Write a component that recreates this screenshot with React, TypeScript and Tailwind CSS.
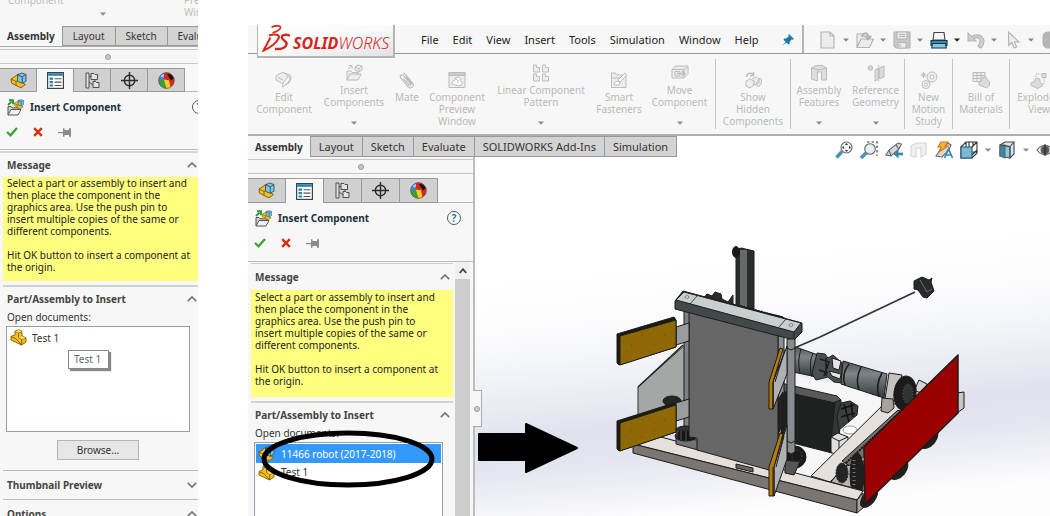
import React from "react";

type IconProps = { className?: string };

const Caret = ({ className = "text-[#8a8a8a]" }: IconProps) => (
  <svg viewBox="0 0 6 4" className={`h-[4px] w-[6px] shrink-0 ${className}`} aria-hidden="true">
    <path d="M0 0.5h6L3 3.8z" fill="currentColor" />
  </svg>
);

const Chevron = ({ down = false }: { down?: boolean }) => (
  <svg viewBox="0 0 10 6" className="h-[6px] w-[10px]" fill="none" stroke="#777" strokeWidth="1.7" aria-hidden="true">
    <path d={down ? "M.8 .8 5 5 9.2 .8" : "M.8 5.2 5 1 9.2 5.2"} />
  </svg>
);

/* ---------- manager tab icons ---------- */

const PartIcon = () => (
  <svg viewBox="0 0 17 17" className="h-[17px] w-[17px] shrink-0" aria-hidden="true">
    <g stroke="#7d5a00" strokeWidth=".9" strokeLinejoin="round">
      <path d="M1 7.500 5 5.800V2.200L9 .8l3 1.500V7l4 2v4l-4.500 3L1 11z" fill="#f4bf1f" />
      <path d="M5 2.400 8.500 4v4.500l3.200 1.800V16" fill="none" />
      <path d="m8.500 4 3.300-1.500M11.700 10.300 16 9M1.200 7.700l5 2.200 5.500 6" fill="none" />
      <path d="m5.200 2.400 3.800-1.500 2.700 1.400L8.500 3.800zM9 8.500l3-1.300 3.700 1.800-4 1.200z" fill="#fbdc6c" stroke="none" />
    </g>
  </svg>
);

const AssemblyShape = () => (
  <>
    <path d="M1 7 5 4.500l3-2.500 5 2v7l2.500 1.500L11 15.800 7 14 1.500 11z" fill="#f4bf1f" stroke="#7d5a00" strokeWidth=".9" />
    <path d="M1.200 7.200 6 9.400v4M6 9.400l3-1.600" fill="none" stroke="#7d5a00" strokeWidth=".9" />
    <path d="m7.500 3 4-2L16 2.500v6.600l-3.700 2.200-4.800-2z" fill="#7fc2dc" stroke="#24576e" strokeWidth=".9" />
    <path d="m7.500 3 4.800 1.800L16 2.500M12.300 4.800v6.400" fill="none" stroke="#24576e" strokeWidth=".9" />
  </>
);

const AssemblyIcon = () => (
  <svg viewBox="0 0 17 17" className="h-[17px] w-[17px] shrink-0" aria-hidden="true">
    <AssemblyShape />
  </svg>
);

const PropertyIcon = () => (
  <svg viewBox="0 0 17 17" className="h-[17px] w-[17px]" aria-hidden="true">
    <rect x=".6" y=".6" width="15.8" height="15.8" fill="#fff" stroke="#39444a" strokeWidth="1.2" />
    <path d="M1.2 1.2h14.6v2.6H1.2z" fill="#2585ab" />
    <path d="M2.5 5.6H6v2.2H2.5zM2.5 9H6v2.2H2.5zM2.5 12.4H6v2.2H2.5z" fill="#2585ab" />
    <path d="M7.5 6.7h7M7.5 10.1h7M7.5 13.5h7" stroke="#555" strokeWidth="1.1" />
  </svg>
);

const ConfigIcon = () => (
  <svg viewBox="0 0 15 17" className="h-[17px] w-[15px]" fill="#e3e3e3" stroke="#4d4d4d" strokeWidth="1" aria-hidden="true">
    <path d="M1 1h3v15H1zM4 4.500h2.500M4 10l4 3" />
    <path d="M6 1.500h3l1 1h2.500v5H6z" />
    <path d="M8 9.500h2.500l1 1h2.500v5H8zM10 7.500v2" />
  </svg>
);

const TargetIcon = () => (
  <svg viewBox="0 0 17 17" className="h-[17px] w-[17px]" fill="none" stroke="#2b2b2b" strokeWidth="1.4" aria-hidden="true">
    <circle cx="8.5" cy="8.500" r="5.200" />
    <path d="M8.500 0v17M0 8.500h17" />
  </svg>
);

const AppearanceIcon = () => (
  <svg viewBox="0 0 17 17" className="h-[17px] w-[17px]" aria-hidden="true">
    <circle cx="8.500" cy="8.500" r="7.900" fill="#d42a1d" />
    <path d="M.6 9C.5 5 3 1.500 6.500.9L5.800 7.500z" fill="#4286d2" />
    <path d="M6.500.9C10 .2 12.500 1.200 14.500 3.400L11 8 6 7z" fill="#d42a1d" />
    <path d="M9 2.200c3-.6 5.500 1.200 6.800 4L13 8.500z" fill="#151515" />
    <path d="m.6 9 5.200-1.500 2.700 8.900C4.500 16.400 1.200 13.500.6 9z" fill="#37a03c" />
    <path d="m5.800 7.500 5.200.7 1.500 7.100c-1.500.9-2.800 1.100-4 1.100z" fill="#f1cf22" />
    <path d="M2.500 4.500C4 2.500 5 2 6 2l-.5 3.500z" fill="#a9cdf3" />
    <circle cx="8.500" cy="8.500" r="7.900" fill="none" stroke="#555" strokeWidth=".6" />
  </svg>
);

const InsertIcon = () => (
  <svg viewBox="0 0 17 17" className="h-[17px] w-[17px] shrink-0" aria-hidden="true">
    <path d="M1 16V7.500h3l1 1.300h7V11" fill="#cfcfcf" stroke="#555" />
    <path d="M1 16 4 10.500h10L11 16z" fill="#f1f1f1" stroke="#555" />
    <g transform="translate(6.500 0) scale(.62)">
      <AssemblyShape />
    </g>
    <path d="M1 6 4.600 2.600M2 1.200h4v4" fill="none" stroke="#2a9b36" strokeWidth="1.900" />
  </svg>
);

const CheckIcon = () => (
  <svg viewBox="0 0 12 10" className="h-[10px] w-[12px]" fill="none" stroke="#3aa52c" strokeWidth="2.300" aria-hidden="true">
    <path d="m1 5 3.500 3.300L11 1" />
  </svg>
);

const CrossIcon = () => (
  <svg viewBox="0 0 10 10" className="h-[10px] w-[10px]" fill="none" stroke="#dd2c10" strokeWidth="2.400" aria-hidden="true">
    <path d="m1.200 1.200 7.600 7.600M8.800 1.200 1.200 8.800" />
  </svg>
);

const PushpinIcon = () => (
  <svg viewBox="0 0 14 9" className="h-[9px] w-[14px]" fill="#8b8b8b" aria-hidden="true">
    <path d="M0 4h5v1.200H0zM5 .3h1.500v1.800h4.500V.3H13v8.400h-2V6.900H6.500v1.800H5z" />
  </svg>
);

const managerTabs = [
  { label: "FeatureManager", icon: <AssemblyIcon /> },
  { label: "PropertyManager", icon: <PropertyIcon /> },
  { label: "ConfigurationManager", icon: <ConfigIcon /> },
  { label: "DimXpertManager", icon: <TargetIcon /> },
  { label: "DisplayManager", icon: <AppearanceIcon /> },
];

/* ---------- property manager parts ---------- */

const CommandTabs = ({ names, tabClass }: { names: string[]; tabClass: string }) => (
  <div role="tablist" className="flex shrink-0">
    {names.map((name, i) => (
      <button
        key={name}
        role="tab"
        aria-selected={i === 0}
        className={
          i === 0
            ? "shrink-0 border-r border-[#999] bg-[#f7f7f7] px-[7px] font-bold text-[#333]"
            : `shrink-0 border-t border-r border-b border-[#999] bg-[#d3d3d3] ${tabClass}`
        }
      >
        {name}
      </button>
    ))}
  </div>
);

const GripStrip = ({ pad = "" }: { pad?: string }) => (
  <div className={`mt-[2px] flex h-[15px] shrink-0 items-center justify-center border-y border-[#c6c6c6] ${pad}`}>
    <span className="size-[6px] rounded-full border border-[#999] bg-[#c9c9c9]" />
  </div>
);

const ManagerTabs = ({ tabClass }: { tabClass: string }) => (
  <div role="tablist" className="mt-[4px] flex shrink-0 border-b border-[#b9b9b9]">
    {managerTabs.map((tab, i) => (
      <button
        key={tab.label}
        role="tab"
        aria-label={tab.label}
        aria-selected={i === 1}
        className={`-mb-px flex items-center justify-center border-t border-r border-[#999] ${tabClass} ${
          i === 1 ? "bg-[#f7f7f7]" : "border-b bg-[#d0d0d0]"
        }`}
      >
        {tab.icon}
      </button>
    ))}
  </div>
);

const TitleRow = ({ children }: { children?: React.ReactNode }) => (
  <>
    <div className="flex h-[30px] shrink-0 items-center gap-[6px] overflow-hidden pl-[7px]">
      <InsertIcon />
      <h2 className="font-bold whitespace-nowrap text-[#22303c]">Insert Component</h2>
      {children}
    </div>
    <div className="flex h-[20px] shrink-0 items-center gap-[15px] pl-[6px]">
      <button aria-label="OK"><CheckIcon /></button>
      <button aria-label="Cancel"><CrossIcon /></button>
      <button aria-label="Keep visible"><PushpinIcon /></button>
    </div>
  </>
);

const SectionHeader = ({ title, down, size }: { title: string; down?: boolean; size: string }) => (
  <button className={`flex w-full shrink-0 items-center justify-between pl-[4px] font-bold text-[#444] ${size}`}>
    {title}
    <Chevron down={down} />
  </button>
);

const Message = ({ height }: { height: string }) => (
  <div className={`shrink-0 bg-[#ffff80] pl-[4px] leading-[12px] text-[#222] ${height}`}>
    <p>
      Select a part or assembly to insert and
      <br />
      then place the component in the
      <br />
      graphics area. Use the push pin to
      <br />
      insert multiple copies of the same or
      <br />
      different components.
    </p>
    <p className="mt-[12px] whitespace-nowrap">
      Hit OK button to insert a component at
      <br />
      the origin.
    </p>
  </div>
);

const HelpIcon = () => (
  <button
    aria-label="Help"
    className="flex size-[14px] shrink-0 items-center justify-center rounded-full border border-[#555] bg-white font-bold text-[#1f7aa5]"
  >
    ?
  </button>
);

const LeftWindow = () => (
  <aside className="flex w-[198px] shrink-0 flex-col overflow-hidden bg-[#f7f7f7]">
    <div className="flex h-[26px] shrink-0 overflow-hidden text-[#bdbdbd]">
      <span className="-mt-[6px] w-[100px] pl-[8px] leading-[12px]">Component</span>
      <span className="flex pt-[12px]"><Caret /></span>
      <span className="-mt-[6px] ml-auto w-[14px] shrink-0 leading-[12px]">
        <span className="block">Preview</span>
        <span className="block">Window</span>
      </span>
    </div>
    <div className="flex h-[21px] shrink-0 overflow-hidden border-b border-[#aaa]">
      <CommandTabs names={["Assembly", "Layout", "Sketch", "Evaluate"]} tabClass="px-[10px]" />
    </div>
    <GripStrip pad="pl-[18px]" />
    <ManagerTabs tabClass="h-[24px] w-[37px]" />
    <TitleRow>
      <span className="-mr-[8px] ml-auto"><HelpIcon /></span>
    </TitleRow>
    <div className="mt-[7px] h-[2px] shrink-0 border-t border-[#bbb]" />
    <div className="flex flex-col border-t-2 border-[#d6d6d6] pl-[3px]">
      <SectionHeader title="Message" size="h-[24px] pr-px" />
      <Message height="h-[104px]" />
      <div className="mt-[4px] h-[2px] shrink-0 bg-[#d2d2d2]" />
      <SectionHeader title="Part/Assembly to Insert" size="h-[24px] pr-px" />
      <div className="h-[15px] shrink-0 pl-[4px] leading-[13px]">Open documents:</div>
      <ul aria-label="Open documents" className="mr-[8px] ml-[3px] flex h-[106px] shrink-0 flex-col border border-[#999fa8] bg-white pt-[2px]">
        <li className="flex items-center gap-[5px] pl-[3px]">
          <PartIcon /> Test 1
        </li>
        <li role="tooltip" className="mt-[4px] ml-[61px] h-[19px] w-[41px] border border-[#888] bg-white pl-[5px] leading-[17px] text-[#666] shadow-[2px_2px_1px_#888]">
          Test 1
        </li>
      </ul>
      <button className="mt-[8px] ml-[54px] h-[20px] w-[82px] shrink-0 border border-[#b5b5b5] bg-[#e6e6e6]">Browse...</button>
      <div className="mt-[10px] h-px shrink-0 bg-[#bbb]" />
      <SectionHeader title="Thumbnail Preview" down size="h-[28px] pr-px" />
      <div className="h-px shrink-0 bg-[#bbb]" />
      <SectionHeader title="Options" size="h-[28px] pr-px" />
    </div>
  </aside>
);

/* ---------- ribbon ---------- */

const gray = { fill: "#ededed", stroke: "#bcbcbc", strokeWidth: 1 };

const Glyph = ({ children }: { children: React.ReactNode }) => (
  <svg viewBox="0 0 18 18" className="h-[18px] w-[18px] shrink-0" {...gray} aria-hidden="true">
    {children}
  </svg>
);

const glyphs = {
  edit: (
    <Glyph>
      <path d="M1 5 5 2.500 8 1.500 12 3v3l4 2-2 4-4 2-9-5z" />
      <path d="m8 12 6-7 2.500 2-6 7-3 2z" fill="#fafafa" />
      <path d="M3 6.500 8 9M9 2l6 2v5" fill="none" />
    </Glyph>
  ),
  insert: (
    <Glyph>
      <path d="M2 16V7h4l1 1.500h6V11M2 16l3-6h11l-3 6zM10 3l3-2 4 1v4l-3 2-4-2zM10 3l4 1.500L17 2M14 4.500V8" />
      <path d="m3 5 3.500-3M3.500 1.500h3.500V5" fill="none" />
    </Glyph>
  ),
  mate: (
    <Glyph>
      <path d="M5.500 7.500 11 14c1 1 2.300 0 1.500-1.200L5.800 4.700C4 2.800 1.200 4.800 2.700 7l7.500 8.800c2.500 2.500 6.500-.5 4.600-3.500L7.500 3.500C6.800 2.600 6 2 5 2M8 6l6 7" fill="none" strokeWidth="1.200" />
    </Glyph>
  ),
  preview: (
    <Glyph>
      <path d="M1 1.500h16v15H1z" />
      <path d="M1 1.500h16v3H1z" fill="#c9c9c9" />
      <path d="m4 11 3-2V7l3-1 2.500 1.500v2L14 11v2.500L10.500 15 4 13zM7 7.500l3 1.500v3" fill="#fff" />
    </Glyph>
  ),
  pattern: (
    <Glyph>
      <path d="M1.500 1h3v2.500h3V8h-6zM10.500 1h3v2.500h3V8h-6zM1.500 10h3v2.500h3V17h-6zM10.500 10h3v2.500h3V17h-6z" />
    </Glyph>
  ),
  fasteners: (
    <Glyph>
      <path d="M1.500 2h4l1 2h9.500v12.500H1.500zM1.500 7h11" />
      <path d="m8 9 7-7 2 2-7 7zM5 11l3-1 2 2-1 2H4z" fill="#fff" />
    </Glyph>
  ),
  move: (
    <Glyph>
      <path d="M1 5.500 5 2h12v7.500L13 14H1zM1 5.500h12V14M13 5.500 17 2M4 7.500h5v4.500H4z" />
      <path d="M6 9.500h7M11 7l3 2.500-3 2.500" fill="none" strokeWidth="1.500" />
    </Glyph>
  ),
  show: (
    <Glyph>
      <path d="m2 10 4-2 4 2v4l-4 3-4-2zM8 8l4-2 3 2v4l-3 2-3-1M12 13l4-6 1.500 1v4l-3 4z" />
      <path d="M2.500 6c0-4 5-5 7-2M9.500 1v3.500H6" fill="none" strokeWidth="1.500" />
    </Glyph>
  ),
  features: (
    <Glyph>
      <path d="M1.500 4 6 1.500h6L16.500 4v12h-5V8h-4v9l-6-2z" fill="#dedede" />
      <path d="m1.500 4 6 1.500h4l5-1.500M7.500 5.500V9" fill="none" />
    </Glyph>
  ),
  reference: (
    <Glyph>
      <circle cx="3.500" cy="4" r="2.300" fill="#d4d4d4" />
      <path d="m8 6 3.500-2v11L8 17zM12 4l5-2v11l-5 2z" fill="#dadada" />
      <path d="M11.700 1v16.500" strokeDasharray="2 1" />
    </Glyph>
  ),
  motion: (
    <Glyph>
      <circle cx="12" cy="6" r="5" /><circle cx="12" cy="6" r="2" fill="#fff" />
      <circle cx="6" cy="13.500" r="4" /><circle cx="6" cy="13.500" r="1.500" fill="#fff" />
      <path d="M3.500 1v6M.5 4h6M1.500 2l4 4M5.500 2l-4 4" />
    </Glyph>
  ),
  bom: (
    <Glyph>
      <path d="M1 1.500h12v9H1zM1 4.500h12M5 1.500v9M9 1.500v9M1 7.500h12" />
      <path d="m7 11 3-1.500V7l3-1 2 1v2l2.500 1.500V14l-3 3L7 14z" fill="#dcdcdc" />
    </Glyph>
  ),
  explode: (
    <Glyph>
      <path d="m1 12 4-2V8l3-1 2 1.500v3l2 1V15l-4 2.500-7-3zM12 2.500h4v4h-4z" fill="#dcdcdc" />
      <path d="M14 7v6h-2M6 6V3h5" fill="none" strokeDasharray="1.500 1" />
    </Glyph>
  ),
};

type RibbonItem = { lines: string[]; icon: React.ReactNode; width: string; caret?: boolean; sep?: boolean };

const ribbon: RibbonItem[] = [
  { lines: ["Edit", "Component"], icon: glyphs.edit, width: "w-[72px]" },
  { lines: ["Insert", "Components"], icon: glyphs.insert, width: "w-[68px]", caret: true },
  { lines: ["Mate"], icon: glyphs.mate, width: "w-[38px]" },
  { lines: ["Component", "Preview", "Window"], icon: glyphs.preview, width: "w-[62px]" },
  { lines: ["Linear Component", "Pattern"], icon: glyphs.pattern, width: "w-[106px]", caret: true },
  { lines: ["Smart", "Fasteners"], icon: glyphs.fasteners, width: "w-[50px]" },
  { lines: ["Move", "Component"], icon: glyphs.move, width: "w-[71px]", caret: true, sep: true },
  { lines: ["Show", "Hidden", "Components"], icon: glyphs.show, width: "w-[74px]", sep: true },
  { lines: ["Assembly", "Features"], icon: glyphs.features, width: "w-[56px]", caret: true },
  { lines: ["Reference", "Geometry"], icon: glyphs.reference, width: "w-[57px]", caret: true, sep: true },
  { lines: ["New", "Motion", "Study"], icon: glyphs.motion, width: "w-[47px]", sep: true },
  { lines: ["Bill of", "Materials"], icon: glyphs.bom, width: "w-[56px]", sep: true },
  { lines: ["Exploded", "View"], icon: glyphs.explode, width: "w-[58px]" },
];

const Ribbon = () => (
  <div className="flex h-[82px] shrink-0 overflow-hidden border-b-2 border-[#b0b0b0] text-[#b9b9b9]">
    {ribbon.map((item) => (
      <React.Fragment key={item.lines.join(" ")}>
        <button
          className={`flex shrink-0 flex-col items-center gap-[2px] pb-[9px] leading-[12px] whitespace-nowrap ${item.width} ${
            item.caret ? "pt-[10px]" : "pt-[17px]"
          }`}
        >
          {item.icon}
          <span>
            {item.lines.map((line) => (
              <span key={line} className="block">{line}</span>
            ))}
          </span>
          {item.caret && <span className="mt-auto"><Caret /></span>}
        </button>
        {item.sep && <span className="my-[5px] w-px shrink-0 bg-[#c4c4c4]" />}
      </React.Fragment>
    ))}
  </div>
);

/* ---------- title bar ---------- */

const QuickIcon = ({ children }: { children: React.ReactNode }) => (
  <svg viewBox="0 0 18 18" className="h-[18px] w-[18px] shrink-0" fill="#ececec" stroke="#b3b3b3" strokeWidth="1.100" aria-hidden="true">
    {children}
  </svg>
);

const quickTools = [
  { label: "New", icon: <QuickIcon><path d="M2 1h9l4 4v12H2zM11 1v4h4" /></QuickIcon> },
  { label: "Open", icon: <QuickIcon><path d="M1 16.500V3h5l1.500 2H14v3M1 16.500 5 8h12.500l-4 8.500z" /><path d="M6 6c1-5 6-5 6 0" fill="none" strokeWidth="2" /><path d="M9 5.500h6L12 9z" fill="#b3b3b3" /></QuickIcon> },
  { label: "Save", icon: <QuickIcon><path d="M1 1h16v16H3l-2-2z" fill="#c8c8c8" /><path d="M4 1h10v7H4zM5 11.500h8V17H5z" /><path d="M6 3.500h6M6 5.500h6M7 13v3" /></QuickIcon> },
  { label: "Print", dark: true, icon: <QuickIcon><path d="M4 1.500h10l1 7.500H3z" fill="#f4f4f4" stroke="#444" /><path d="M1 9.500h16v5H1z" fill="#2e8cb2" stroke="#16384a" /><path d="M2.500 12.500h13l.8 4.500H1.700z" fill="#8cc5dc" stroke="#16384a" /></QuickIcon> },
  { label: "Undo", icon: <QuickIcon><path d="M1 2v8h8L6.500 7.500c4-2 8 0 6 4.500L11 15.500l3 1.500c6-7 2-14-6-13L4.500 5.500z" fill="#cfcfcf" /></QuickIcon> },
  { label: "Select", icon: <QuickIcon><path d="m4.500 1 .2 13.500L8 11.500l2.200 5.500 2.500-1L10.500 11h4.500z" /></QuickIcon> },
  { label: "Rebuild", icon: <QuickIcon><rect x="2" y="1" width="15" height="16" rx="5" fill="#b5b5b5" /></QuickIcon> },
];

const TitleBar = () => (
  <header className="flex h-[29px] shrink-0 border-b border-[#999]">
    <div className="z-10 ml-[9px] flex h-[33px] w-[138px] shrink-0 gap-[3px] border-r-2 border-b-2 border-l border-[#b5b5b5] bg-linear-to-br from-white via-[#fafafa] to-[#e2e2e2] pl-[4px] text-[#d8261c]">
      <svg viewBox="0 0 28 27" className="h-[27px] w-[28px] shrink-0" fill="none" stroke="currentColor" aria-hidden="true">
        <path d="M9.500 2.200C13 .5 19 .3 18.500 2.600 18 4.800 13.500 7 10.500 7.800" strokeWidth="1.700" />
        <path d="M7 10.500C13 8.500 18 9.500 16.800 12.800 15 17.500 8 23 1.500 25.500L8.500 12.500" strokeWidth="2" />
        <path d="M28 10.500C24 9.200 20 9.800 19.800 12 19.500 15.500 25.500 15.500 24.500 19.500 23.500 23.300 18 24.300 13 24" strokeWidth="2.400" />
      </svg>
      <span className="pt-[8px] text-[16px] leading-[20px] italic">
        <b>SOLID</b><span className="font-light">WORKS</span>
      </span>
    </div>
    <nav className="ml-[26px] flex shrink-0 items-center gap-[14px] pt-[2px] text-[11px] text-[#222]">
      {["File", "Edit", "View", "Insert", "Tools", "Simulation", "Window", "Help"].map((m) => (
        <button key={m}>{m}</button>
      ))}
    </nav>
    <button aria-label="Pin menu" className="ml-auto shrink-0 pt-[2px]">
      <svg viewBox="0 0 12 12" className="h-[12px] w-[12px]" aria-hidden="true">
        <path d="M7 0 12 5 10.500 5.800 9.500 5.500 7.500 8.200 7.500 10 6.300 10.500 4.300 8.500 .5 11.700 3.500 7.700 1.600 5.800 2 4.500 4 4.500 6.700 2.500 6.300 1z" fill="#1f79a8" />
      </svg>
    </button>
    <div className="ml-[8px] flex w-[248px] shrink-0 overflow-hidden border-l-2 border-[#b5b5b5] pl-[15px]">
      {quickTools.map((t) => (
        <button key={t.label} aria-label={t.label} className="flex w-[37px] shrink-0 items-center gap-[6px] pt-[2px]">
          {t.icon}
          <Caret className={t.dark ? "text-[#222]" : "text-[#888]"} />
        </button>
      ))}
    </div>
  </header>
);

/* ---------- heads-up toolbar ---------- */

const HudIcon = ({ children }: { children: React.ReactNode }) => (
  <svg viewBox="0 0 18 18" className="h-[18px] w-[18px] shrink-0" fill="none" stroke="#666" strokeWidth="1.100" aria-hidden="true">
    {children}
  </svg>
);

const Cube = ({ shift = false }: { shift?: boolean }) =>
  shift ? (
    <>
      <path d="M2 4 7 1h9v12l-4 4-10-2z" fill="#d4eaf2" stroke="#444" />
      <path d="M2 4h5v13l-5-2z" fill="#2f8bb0" />
      <path d="M7 4.500 12 6v11l-5-1z" fill="#8fc9df" />
      <path d="m2 4 10 1.500L16 1M12 5.500V17" stroke="#444" />
    </>
  ) : (
    <>
      <path d="M1 6 6 1h11v11l-5 5H1zM6 1v5M12 6l5-5M12 11h5M9 1v5M13 1v4M12 14l5-5" stroke="#333" />
      <path d="M1 6h11v11H1z" fill="#7ab9d3" stroke="#24586e" />
    </>
  );

const hud = [
  { label: "Zoom to fit", icon: <HudIcon><path d="m1.500 16.500 5.500-6" stroke="#4a93b5" strokeWidth="3.500" /><circle cx="11.500" cy="6.500" r="5.500" fill="#eef4f6" /><path d="m11.500 2 1.500 2h-3zM11.500 11l1.500-2h-3zM7 6.500l2-1.500v3zM16 6.500l-2-1.500v3z" fill="#333" stroke="none" /></HudIcon> },
  { label: "Zoom to area", icon: <HudIcon><path d="m1 17 5-5" stroke="#4a93b5" strokeWidth="3.500" /><circle cx="10" cy="8" r="5.300" fill="#e6f0f4" /><path d="M7 1h10v14" stroke="#333" strokeDasharray="2.500 2" /></HudIcon> },
  { label: "Previous view", icon: <HudIcon><path d="M1 14 4 9l9-7 3.500 1L14 8l-8 7z" fill="#d8d8d8" /><path d="m4 9 2 6M11 3.500 13.500 8" /><path d="M18 13h-7" stroke="#2d87ae" strokeWidth="2.600" /><path d="m8.500 13 5-4.500v9z" fill="#2d87ae" stroke="none" /></HudIcon> },
  { label: "Section view", icon: <HudIcon><path d="M1 5 6 2h10v11l-5 3V7H6v9l-5-1z" fill="#f0f0f0" stroke="#d4d4d4" /></HudIcon> },
  { label: "Annotations", icon: <HudIcon><path d="m1 15 4-6 8-7 3 2-2 5-7 7z" fill="#d8d8d8" /><path d="M6 1h7L10 5h3L4 11 6 6H3z" fill="#f7b63b" stroke="#d8701c" /><path d="m9.500 17 4-9 4 9M11 14h5" stroke="#2d87ae" strokeWidth="1.700" /></HudIcon> },
  { label: "View orientation", icon: <HudIcon><Cube /></HudIcon>, caret: true },
  { label: "Display style", icon: <HudIcon><Cube shift /></HudIcon>, caret: true },
  { label: "Hide items", icon: <HudIcon><path d="M1 9c4-6 12-6 16 0-4 6-12 6-16 0z" fill="#f4f4f4" /><circle cx="9" cy="9" r="4" fill="#555" /><path d="M9 3v12" stroke="#222" /></HudIcon> },
];

const HeadsUp = () => (
  <div className="ml-auto flex h-[28px] w-[215px] shrink-0 items-center gap-[7px]">
    {hud.map((h) => (
      <button key={h.label} aria-label={h.label} className="flex shrink-0 items-center gap-[7px]">
        {h.icon}
        {h.caret && <Caret />}
      </button>
    ))}
  </div>
);

/* ---------- model view ---------- */

const Robot = () => (
  <svg
    viewBox="475 157 575 359"
    preserveAspectRatio="xMinYMin slice"
    className="h-full w-full"
    stroke="#1c1c1c"
    strokeWidth="1"
    strokeLinejoin="round"
    role="img"
    aria-label="Robot assembly"
  >
    <defs>
      <linearGradient id="cyl" x1="0" y1="0" x2="0" y2="1">
        <stop offset="0" stopColor="#4f5659" /><stop offset=".35" stopColor="#7c8588" /><stop offset="1" stopColor="#33393b" />
      </linearGradient>
      <linearGradient id="sky" x1=".4" y1="0" x2=".55" y2="1">
        <stop offset=".25" stopColor="#fff" stopOpacity="0" /><stop offset=".72" stopColor="#dfe2ed" /><stop offset=".8" stopColor="#e3e5ef" /><stop offset=".97" stopColor="#fdfdfe" />
      </linearGradient>
      <pattern id="grain" width="23" height="17" patternUnits="userSpaceOnUse">
        <path d="M0 0h23v17H0z" fill="#8f6a04" stroke="none" />
        <path d="M2 2h1M9 5h2M17 3h1M5 11h1M13 9h1M20 12h2M10 15h1" stroke="#6b4e00" strokeWidth=".7" />
      </pattern>
    </defs>
    <path d="M475 157h575v359H475z" fill="url(#sky)" stroke="none" />

    {/* floor inside the frame */}
    <path d="m700 445 90-70 110 20 20 15-60 80-60-5z" fill="#f6f6f6" stroke="none" />

    {/* mast */}
    <path d="m736 250 5-2 13 3v64l-18-5z" fill="#2b2d2d" />
    <path d="M740 250h7v62l-7-2z" fill="#686a6a" stroke="none" />
    <ellipse cx="736" cy="252" rx="3.500" ry="5.500" fill="#191919" />
    <path d="m703 299 4-5 5 2 3-4 6 2 1 5 6 3 5-7v9l8 3 42 10 3 7-80-20z" fill="#2a2a2a" />
    <path d="m740 307 44 12" stroke="#111" strokeWidth="4" strokeDasharray="2 1" />

    {/* side plate and rear post */}
    <path d="m685 345-47 42v28l51-10z" fill="#a5a6a6" stroke="#333" />
    <path d="m683 345-45 42" stroke="#222" strokeWidth="1.500" />
    <path d="M684 308h6v132h-6z" fill="#7d8183" />
    <ellipse cx="672" cy="401" rx="9" ry="5" fill="#252525" />

    {/* cable and sensor */}
    <path d="m792 349 28-12 95-45" fill="none" stroke="#333" strokeWidth="1.700" />
    <path d="m914 281 8-4 7 3 3-2-1 4 3 9-7 7-4-1-5-7-4-1z" fill="#272b2b" />
    <path d="m920 280 7 12 5-3" fill="none" stroke="#6a7070" />

    {/* motors */}
    <path d="m793 346 25 9-1 22-24-5z" fill="url(#cyl)" />
    <path d="M801 349q-4 12-1 24M813 353q-5 12-1 24" fill="none" />
    <path d="m817 353 8 1 3 4 5-3 9 8v20l-8-1-6-5-12 3-4-6z" fill="#485050" />
    <path d="m832 358 9 3-2 9-6-2zM829 371l12 3-1 5-8-3z" fill="#e7e4e1" />
    <path d="m820 359 9 3-5 14M826 358v18M819 370l9 3" fill="none" strokeWidth="1.500" />
    <path d="m843 361 44 13-3 24-43-14z" fill="url(#cyl)" />
    <path d="M849 364q-8 10-4 21M861 367q-6 12-2 23M882 373q-7 12-3 24" fill="none" strokeWidth="1.500" />
    <path d="m889 373 13 2-5 26-12-2z" fill="#c7c2bd" />

    {/* battery */}
    <path d="m781 383 56 13 4 4-6 5-54-14z" fill="#57595a" />
    <path d="m781 391 54 12-3 50-51-13z" fill="#1f2020" />
    <path d="m835 402 6-2-2 45-9 7z" fill="#343636" />
    <path d="m841 403 9-2 8 5-1 9-18 15-2-14z" fill="#3b3f40" />
    <path d="m841 409 13-4M841 417l14-4M844 404l5 18M851 403l2 14" stroke="#111" strokeWidth="1.500" />
    <ellipse cx="850" cy="430" rx="7" ry="4" fill="#fff" stroke="#999" />
    <path d="m831 437 7-4 10 4v11l-10 8-7-4z" fill="#dedede" />
    <path d="m831 437 8 4 9-4M839 441v14" fill="none" />

    {/* cross beam */}
    <path d="m811 476 75-74 18 4-74 76z" fill="#e5e0db" />
    <path d="m882 398 11 1 1 9-6 5-7-2z" fill="#a8a29e" />
    <path d="m919 380 8 4-4 9-9-2z" fill="#d9d4cf" />
    <ellipse cx="905" cy="393" rx="11" ry="17" fill="#1b1b1b" transform="rotate(8 905 393)" />
    <ellipse cx="908" cy="394" rx="5" ry="10" fill="#303434" stroke="#666" strokeDasharray="1 2" />
    <path d="m842 461 56-51 5 4-50 54z" fill="#77716d" />
    <path d="m846 463 50-47" stroke="#111" strokeWidth="2" strokeDasharray="2 1" />
    <path d="m831 482 12-15 21-6v30z" fill="#bbb5b0" />
    <ellipse cx="842" cy="473" rx="6" ry="10" fill="#242424" strokeDasharray="2 1" />
    <ellipse cx="857" cy="475" rx="7" ry="22" fill="#1f1f1f" />
    <path d="M854 460v32" stroke="#777" strokeDasharray="1 3" strokeWidth="3" />

    {/* front beam */}
    <path d="m633 444 24-8 206 55-6 9z" fill="#e5e0dc" />
    <path d="m633 444 224 56v13l-224-60z" fill="#7b7672" />
    <path d="m857 500 6-7 1 14-7 6z" fill="#aaa49f" />
    <path d="m736 464 17 4v4l-17-4z" fill="#666" />
    <path d="m676 438 22 2v10l-22-6z" fill="#727373" />
    <ellipse cx="686" cy="431" rx="11" ry="5" fill="#303030" />
    <ellipse cx="686" cy="436" rx="11" ry="5" fill="#151515" />
    <path d="M677 430v8M681 431v9M686 431v10M691 431v8" stroke="#555" />

    {/* plow */}
    <ellipse cx="928" cy="438" rx="8" ry="12" fill="#1f1f1f" transform="rotate(40 928 438)" />
    <ellipse cx="898" cy="469" rx="8" ry="12" fill="#1f1f1f" transform="rotate(40 898 469)" />
    <ellipse cx="869" cy="498" rx="6" ry="11" fill="#1f1f1f" transform="rotate(40 869 498)" />
    <path d="m957 393 7-1v16l-7 5z" fill="#c9c5c1" />
    <path d="m864 447 94-92v58l-93 91z" fill="#9a0000" strokeWidth="1.500" />

    {/* centre panel */}
    <path d="M778 330h6v62l-4 35-2 10z" fill="#8b8f91" />
    <path d="m778 400 5-8v32l-5 10z" fill="#222" />
    <path d="M689 304 778 328v137l-9 5-72-20v-12l-8-1z" fill="#666" />
    <path d="m675 301 8-10 119 32v9l-8 8-119-31z" fill="#43494a" />
    <path d="m676 300 8-8 117 31-7 9z" fill="#c9ced0" />
    <path d="m690 304 7-8M779 327l7-8M794 332v8" fill="none" strokeWidth=".8" />
    <ellipse cx="687" cy="297" rx="2" ry="1.300" fill="#eee" strokeWidth=".5" /><ellipse cx="791" cy="325" rx="2" ry="1.300" fill="#eee" strokeWidth=".5" />

    {/* front post */}
    <ellipse cx="795" cy="457" rx="11" ry="11" fill="#1a1a1a" />
    <path d="m785 460 15 2-6 13-9-2z" fill="#555" />
    <ellipse cx="797" cy="456" rx="5" ry="6" fill="none" stroke="#555" strokeDasharray="1 2" />
    <path d="M787 339h8v113l-4 2-4-2z" fill="#888c8f" />
    <path d="M787 441l4 2 4-2M787 348l4 2 4-2" fill="none" />

    {/* paddles */}
    <path d="m676 327 13-4v18l-13 4z" fill="#999c9d" />
    <path d="m676 403 13-4v18l-13 4z" fill="#999c9d" />
    <path d="m617 334 57-17 2 3v27l-57 18-2-2z" fill="#1e1a10" />
    <path d="m620 336 56-16v27l-56 18z" fill="url(#grain)" />
    <path d="m617 421 57-18 2 2v27l-57 19-2-2z" fill="#1e1a10" />
    <path d="m620 423 56-18v27l-56 19z" fill="url(#grain)" />
    <path d="m773 382 14-36v28l-14 35z" fill="#aeb1b2" />
    <path d="m769 382 11-34 3 1-10 33v27h-4z" fill="#b87d09" />
    <path d="M773 382v27M775 382l10-32" fill="none" />
    <path d="m774 467 13-42v34l-13 37z" fill="#aeb1b2" />
    <path d="m769 467 11-34 3 1-9 33v29h-5z" fill="#b87d09" />
    <path d="M773 467v29M776 467l8-31" fill="none" />
    <path d="M479 434h47v-10l51 24-51 24v-12h-47z" fill="#000" stroke="#000" strokeWidth="2" />
  </svg>
);

const RightPanel = () => (
  <section className="relative flex w-[225px] shrink-0 flex-col overflow-hidden bg-[#f7f7f7]">
    <GripStrip />
    <ManagerTabs tabClass="h-[25px] w-[38px]" />
    <TitleRow>
      <span className="ml-auto pr-[12px]"><HelpIcon /></span>
    </TitleRow>
    <div className="mt-[8px] h-px shrink-0 bg-[#bbb]" />
    <div className="flex min-h-0 flex-1">
      <div className="flex min-w-0 flex-1 flex-col overflow-hidden pl-[3px]">
        <div className="mt-[1px] h-px shrink-0 bg-[#ccc]" />
        <SectionHeader title="Message" size="h-[26px] pr-[3px]" />
        <Message height="h-[107px] pt-px" />
        <div className="mt-[4px] h-[2px] shrink-0 bg-[#d2d2d2]" />
        <SectionHeader title="Part/Assembly to Insert" size="h-[24px] pr-[3px]" />
        <div className="h-[15px] shrink-0 pl-[4px] leading-[13px]">Open documents:</div>
        <ul role="listbox" aria-label="Open documents" className="mr-[10px] ml-[3px] h-[110px] shrink-0 border border-[#999fa8] bg-white p-px">
          <li role="option" aria-selected="true" className="flex h-[19px] items-center gap-[6px] bg-[#3399ff] pl-[2px] text-white">
            <AssemblyIcon /> 11466 robot (2017-2018)
          </li>
          <li role="option" aria-selected="false" className="flex h-[18px] items-center gap-[6px] pl-[2px]">
            <PartIcon /> Test 1
          </li>
        </ul>
      </div>
      <div className="ml-[2px] w-[15px] shrink-0 bg-[#cdcdcd]">
        <button aria-label="Scroll up" className="flex h-[17px] w-full items-center justify-center bg-[#f0f0f0]">
          <svg viewBox="0 0 8 6" className="h-[6px] w-[8px]" fill="none" stroke="#444" strokeWidth="1.800" aria-hidden="true">
            <path d="M.7 5 4 1.200 7.300 5" />
          </svg>
        </button>
      </div>
      <div className="w-[3px] shrink-0" />
    </div>
    <svg viewBox="0 0 176 60" className="absolute top-[272px] left-[12px] h-[60px] w-[176px]" fill="none" stroke="#000" strokeWidth="5" aria-hidden="true">
      <ellipse cx="88" cy="30" rx="84" ry="26" />
    </svg>
  </section>
);

const RightWindow = () => (
  <main className="mt-[25px] flex min-w-0 flex-1 flex-col overflow-hidden bg-[#f7f7f7]">
    <TitleBar />
    <Ribbon />
    <div className="z-10 flex h-[21px] shrink-0 bg-white">
      <CommandTabs
        names={["Assembly", "Layout", "Sketch", "Evaluate", "SOLIDWORKS Add-Ins", "Simulation"]}
        tabClass="px-[8px] text-[11px]"
      />
      <HeadsUp />
    </div>
    <div className="flex min-h-0 flex-1">
      <RightPanel />
      <div className="relative min-w-0 flex-1 border-l-2 border-[#bdbdbd] bg-white">
        <Robot />
        <button
          aria-label="Collapse panel"
          className="absolute top-[233px] -left-[2px] flex h-[37px] w-[9px] items-center justify-center border border-l-0 border-[#aaa] bg-[#f7f7f7]"
        >
          <span className="size-[6px] rounded-full border border-[#999] bg-[#ccc]" />
        </button>
      </div>
    </div>
  </main>
);

export default function App() {
  return (
    <div className="flex h-screen gap-[50px] overflow-hidden bg-white font-['Noto_Sans','Open_Sans',sans-serif] text-[10px] leading-[14px] text-[#333]">
      <LeftWindow />
      <RightWindow />
    </div>
  );
}
